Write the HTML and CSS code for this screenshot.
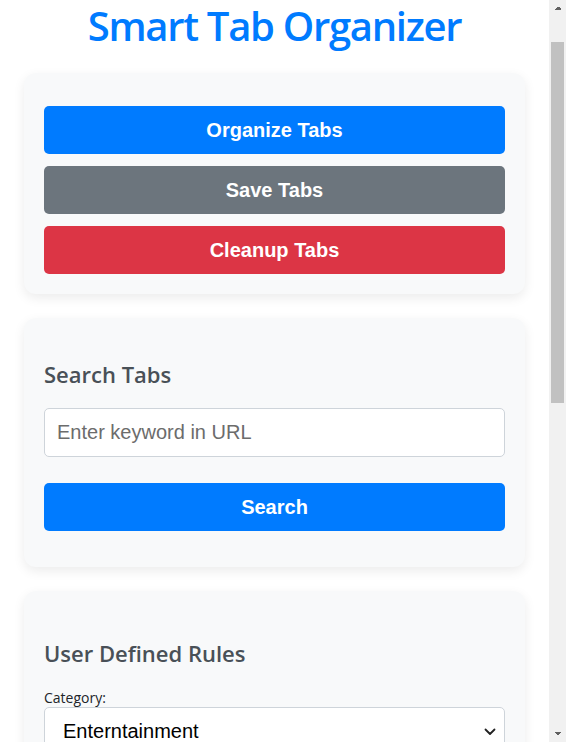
FILE: index.html
```html
<!DOCTYPE html>
<html lang="en">
<head>
<meta charset="utf-8">
<title>Smart Tab Organizer</title>
<link rel="stylesheet" href="styles.css">
</head>
<body>
  <h1 class="title">Smart Tab Organizer</h1>

  <section class="card card-actions">
    <button class="btn btn-primary">Organize Tabs</button>
    <button class="btn btn-secondary">Save Tabs</button>
    <button class="btn btn-danger">Cleanup Tabs</button>
  </section>

  <section class="card card-search">
    <h2 class="card-title">Search Tabs</h2>
    <input class="field" type="text" placeholder="Enter keyword in URL">
    <button class="btn btn-primary">Search</button>
  </section>

  <section class="card card-rules">
    <h2 class="card-title">User Defined Rules</h2>
    <label class="field-label" for="category">Category:</label>
    <div class="select-wrap">
      <select class="field field-select" id="category">
        <option>Enterntainment</option>
        <option>Work</option>
        <option>Social</option>
        <option>News</option>
      </select>
      <svg class="chevron" width="12" height="8" viewBox="0 0 12 8" aria-hidden="true"><path d="M1.5 1.5 L6 6 L10.5 1.5" fill="none" stroke="#222" stroke-width="1.8" stroke-linecap="round" stroke-linejoin="round"/></svg>
    </div>
    <label class="field-label" for="keyword">Keyword:</label>
    <input class="field" id="keyword" type="text" placeholder="Enter keyword">
    <button class="btn btn-success">Add Rule</button>
  </section>

  <div class="scrollbar" aria-hidden="true">
    <div class="sb-btn sb-up"></div>
    <div class="sb-track"><div class="sb-thumb"></div></div>
    <div class="sb-btn sb-down"></div>
  </div>
</body>
</html>
```

FILE: styles.css
```css
html {
  margin: 0;
}

body {
  margin: 0;
  padding: 0 41px 0 24px;
  background: #ffffff;
  font-family: "Open Sans", "Noto Sans", sans-serif;
  color: #212529;
}

.title {
  margin: 2px 0 23px;
  font-size: 40px;
  line-height: 48px;
  font-weight: 600;
  letter-spacing: -1.3px;
  text-align: center;
  color: #007bff;
}

.card {
  background: #f8f9fa;
  border-radius: 12px;
  box-shadow: 0 4px 12px rgba(0, 0, 0, 0.08);
  padding: 20px;
  margin-bottom: 24px;
  display: flex;
  flex-direction: column;
}

.card-actions {
  padding-top: 33px;
  gap: 12px;
}

.card-search {
  padding-bottom: 36px;
}

.card-title {
  margin: 20px 0 18px;
  font-size: 22px;
  line-height: 32px;
  font-weight: 600;
  color: #495057;
}

.card-rules .card-title {
  margin: 26px 0 15px;
}

.btn {
  display: block;
  width: 100%;
  height: 48px;
  border: none;
  border-radius: 5px;
  font-family: "Liberation Sans", Arial, sans-serif;
  font-size: 20px;
  font-weight: 700;
  color: #ffffff;
  cursor: pointer;
}

.btn-primary { background: #007bff; }
.btn-secondary { background: #6c757d; }
.btn-danger { background: #dc3545; }
.btn-success { background: #28a745; }

.field {
  display: block;
  width: 100%;
  box-sizing: border-box;
  padding: 12px;
  border: 1px solid #ced4da;
  border-radius: 5px;
  background: #ffffff;
  font-family: "Liberation Sans", Arial, sans-serif;
  font-size: 20px;
  line-height: 23px;
  color: #000000;
  margin: 0 0 26px;
}

.field::placeholder {
  color: #6c6c6c;
}

.field-label {
  display: block;
  margin: 4px 0 0;
  font-size: 14px;
  line-height: 19px;
  color: #212529;
}

.select-wrap {
  position: relative;
}

.field-select {
  appearance: none;
  -webkit-appearance: none;
  padding-left: 18px;
  margin-bottom: 16px;
}

.chevron {
  position: absolute;
  right: 9px;
  top: 21px;
}

/* imitation of the window's classic vertical scrollbar */
.scrollbar {
  position: fixed;
  top: 0;
  right: 0;
  width: 17px;
  height: 100vh;
  background: #f1f1f1;
  display: flex;
  flex-direction: column;
}

.sb-btn {
  flex: none;
  height: 17px;
  background-repeat: no-repeat;
}

.sb-up {
  background-image:
    linear-gradient(to top left, #606060 50%, transparent 50%),
    linear-gradient(to top right, #606060 50%, transparent 50%);
  background-size: 4px 4px, 4px 4px;
  background-position: 5px 6px, 9px 6px;
}

.sb-down {
  background-image:
    linear-gradient(to bottom left, #606060 50%, transparent 50%),
    linear-gradient(to bottom right, #606060 50%, transparent 50%);
  background-size: 4px 4px, 4px 4px;
  background-position: 5px 7px, 9px 7px;
}

.sb-track {
  flex: 1;
  padding: 25px 2px 0;
}

.sb-thumb {
  height: 361px;
  background: #c1c1c1;
}
```
